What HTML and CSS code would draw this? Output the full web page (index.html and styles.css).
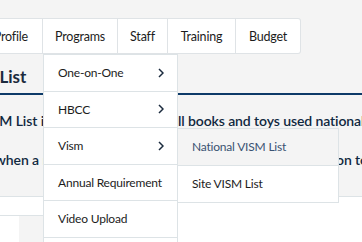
FILE: index.html
```html
<!DOCTYPE html>
<html>
<head>
<meta charset="utf-8">
<link rel="stylesheet" href="styles.css">
</head>
<body>
<div class="page">
  <div class="topbar"></div>
  <nav class="nav">
    <div class="nav-item first">Profile</div>
    <div class="nav-item w-programs">Programs</div>
    <div class="nav-item w-staff">Staff</div>
    <div class="nav-item w-training">Training</div>
    <div class="nav-item w-budget last">Budget</div>
  </nav>
  <main class="content">
    <h1 class="title">National VISM List</h1>
    <div class="rule"></div>
    <p class="text t1"><span class="lead l1">The National VISM List i</span><span class="gap g1">ncludes details of a</span>ll books and toys used nationally.</p>
    <p class="text t2"><span class="lead l2">Resources are added to this list when a</span><span class="gap g2"> new book or toy is approved and then passed </span>on to the sites.</p>
  </main>
  <section class="lower">
    <div class="tabs"></div>
    <div class="panel"></div>
  </section>

  <div class="dropdown">
    <div class="dd-item"><span>One-on-One</span><svg class="chev" viewBox="0 0 6 10"><polyline points="1,1 5,5 1,9"/></svg></div>
    <div class="dd-item"><span>HBCC</span><svg class="chev" viewBox="0 0 6 10"><polyline points="1,1 5,5 1,9"/></svg></div>
    <div class="dd-item vism"><span>Vism</span><svg class="chev" viewBox="0 0 6 10"><polyline points="1,1 5,5 1,9"/></svg>
      <div class="submenu">
        <div class="sub-item hover">National VISM List</div>
        <div class="sub-item">Site VISM List</div>
      </div>
    </div>
    <div class="dd-item"><span>Annual Requirement</span></div>
    <div class="dd-item"><span>Video Upload</span></div>
    <div class="dd-item"><span>Reports</span></div>
  </div>
</div>
</body>
</html>
```
FILE: styles.css
```css
* { box-sizing: border-box; }
html, body { margin: 0; padding: 0; }
body {
  background: #ffffff;
  font-family: "Lato", "Liberation Sans", sans-serif;
  color: #1c1c1c;
  overflow: hidden;
  width: 362px;
  height: 242px;
}
.page {
  position: relative;
  width: 362px;
  height: 242px;
  overflow: hidden;
  background: #f4f4f4;
}
.topbar { height: 18px; }
.nav {
  display: flex;
  height: 36px;
  margin-left: -19px;
  background: #ffffff;
  border: 1px solid #dfe3e6;
  border-left: none;
  border-radius: 0 3px 3px 0;
  width: max-content;
}
.nav-item {
  display: flex;
  align-items: center;
  justify-content: center;
  font-size: 12.5px;
  letter-spacing: -0.2px;
  border-right: 1px solid #dfe3e6;
  height: 100%;
  white-space: nowrap;
}
.nav-item.first { width: 62px; justify-content: flex-end; padding-right: 14px; }
.w-programs { width: 75px; }
.w-staff { width: 50px; }
.w-training { width: 68px; }
.w-budget { width: 64px; border-right: none; }

.content {
  height: 143px;
  padding-top: 11px;
  border-bottom: 1px solid #dde3e6;
  overflow: hidden;
}
.title {
  margin: 0 0 4px -115px;
  font-size: 17px;
  line-height: 24px;
  font-weight: 700;
  color: #1b2b3e;
  white-space: nowrap;
}
.rule { height: 2px; background: #0d3a68; }
.text {
  margin: 0;
  font-size: 14px;
  letter-spacing: -0.1px;
  line-height: 20px;
  font-weight: 600;
  color: #10283f;
  white-space: nowrap;
}
.t1 { margin-top: 16px; }
.t2 { margin-top: 19px; }
.lead, .gap {
  display: inline-block;
  vertical-align: top;
  overflow: hidden;
  white-space: nowrap;
}
.lead { direction: rtl; text-align: right; }
.l1 { width: 44px; }
.l2 { width: 39px; }
.g1 { width: 134px; }
.g2 { width: 297px; white-space: pre; }

.lower { background: #ffffff; height: 46px; }
.tabs { height: 19px; width: 170px; border-bottom: 1px solid #dde3e6; }
.panel { margin-left: 19px; width: 150px; height: 27px; background: #f4f4f4; }

.dropdown {
  position: absolute;
  left: 43px;
  top: 54px;
  width: 135px;
  background: #ffffff;
  border: 1px solid #dde3e6;
}
.dd-item {
  position: relative;
  height: 36.5px;
  border-bottom: 1px solid #dde3e6;
  display: flex;
  align-items: center;
  justify-content: space-between;
  padding: 0 13px 0 14px;
  font-size: 12px;
  letter-spacing: -0.2px;
  color: #1c1c1c;
  white-space: nowrap;
}
.chev {
  width: 6px;
  height: 10px;
  fill: none;
  stroke: #1b2b3e;
  stroke-width: 1.5;
}
.submenu {
  position: absolute;
  left: 133px;
  top: 0;
  width: 162px;
  background: #ffffff;
  border: 1px solid #dde3e6;
}
.sub-item {
  height: 36.5px;
  display: flex;
  align-items: center;
  padding-left: 14px;
  font-size: 12px;
  letter-spacing: -0.2px;
  color: #1c1c1c;
  white-space: nowrap;
}
.sub-item.hover {
  background: #f4f4f4;
  color: #3a5272;
  border-bottom: 1px solid #dde3e6;
}
```
